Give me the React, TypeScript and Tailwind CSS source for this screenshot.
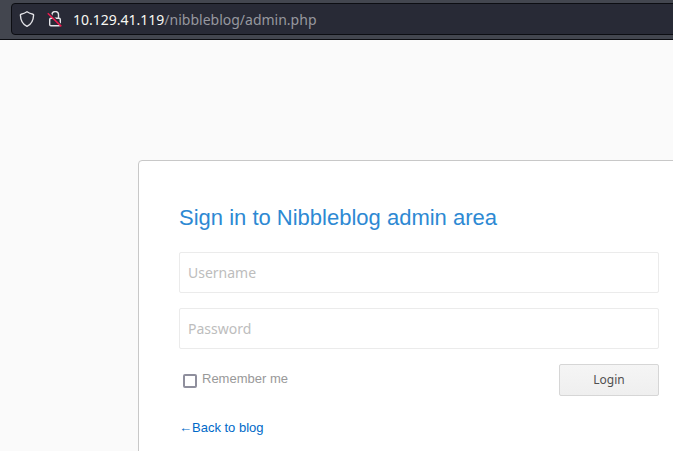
import { useState } from 'react';

const ShieldIcon = () => (
  <svg className="h-4 w-4 shrink-0" viewBox="0 0 16 16" fill="none" aria-hidden="true">
    <path
      d="M8 .8C9.9 2.2 12 2.9 14 3.2c.4 0 .6.4.6.8C14.4 9.4 12.3 13.4 8 15.3 3.7 13.4 1.6 9.4 1.4 4c0-.4.2-.8.6-.8C4 2.9 6.1 2.2 8 .8Z"
      stroke="#e4e4e8"
      strokeWidth="1.4"
      strokeLinejoin="round"
    />
  </svg>
);

const InsecureLockIcon = () => (
  <svg className="h-4 w-4 shrink-0" viewBox="0 0 16 16" fill="none" aria-hidden="true">
    <path d="M5 7V3.8a3.200 3.200 0 0 1 6.500 0V7" stroke="#e4e4e8" strokeWidth="1.4" />
    <rect x="2.7" y="7.2" width="10.6" height="7.6" rx="1.3" stroke="#e4e4e8" strokeWidth="1.4" />
    <path d="M2 1.800 15 14.800" stroke="#282a36" strokeWidth="1.6" />
    <path d="M.8 2.2 14.3 15.4" stroke="#ee1a4e" strokeWidth="1.5" />
  </svg>
);

const AddressBar = () => (
  <header className="h-10 shrink-0 border-b border-[#0c0d12] bg-[#43464f] pt-[3px] pl-[11px]">
    <div className="-mr-2 flex h-8 items-center rounded border border-[#0c0d12] bg-[#282a36] pl-[7px]">
      <ShieldIcon />
      <span className="ml-3 flex">
        <InsecureLockIcon />
      </span>
      <span className="ml-2.5 pt-0.5 text-sm whitespace-nowrap text-[#97989f]">
        <span className="text-[#f8f8f2]">10.129.41.119</span>/nibbleblog/admin.php
      </span>
    </div>
  </header>
);

const inputClass =
  'block h-[41px] w-full rounded-xs border border-[#ebebeb] bg-white px-2 font-["Noto_Sans",sans-serif] text-sm text-[#333333] placeholder:text-[#bdbdbd] focus:outline-none';

const LoginForm = () => {
  const [username, setUsername] = useState('');
  const [password, setPassword] = useState('');
  const [remember, setRemember] = useState(false);

  return (
    <form onSubmit={(e) => e.preventDefault()}>
      <h1 className="mb-[18px] text-[22px] leading-8 text-[#2d89d3]">Sign in to Nibbleblog admin area</h1>

      <input
        type="text"
        aria-label="Username"
        placeholder="Username"
        value={username}
        onChange={(e) => setUsername(e.target.value)}
        className={`${inputClass} mb-[15px]`}
      />
      <input
        type="password"
        aria-label="Password"
        placeholder="Password"
        value={password}
        onChange={(e) => setPassword(e.target.value)}
        className={`${inputClass} mb-[15px]`}
      />

      <div className="flex h-8 items-center justify-between">
        <label className="flex items-center text-[13px] leading-4 text-[#999999]">
          <input
            type="checkbox"
            checked={remember}
            onChange={(e) => setRemember(e.target.checked)}
            className="mt-0.5 mr-[5px] ml-1 h-3.5 w-3.5 appearance-none rounded-xs border-2 border-[#8f8f9d] bg-white checked:bg-[#2d89d3]"
          />
          <span className="pb-0.5">Remember me</span>
        </label>
        <button
          type="submit"
          className="h-8 w-[100px] rounded-xs border border-[#d6d6d6] bg-linear-to-b from-[#f5f5f5] to-[#efefef] font-['Noto_Sans',sans-serif] text-xs text-[#505050]"
        >
          Login
        </button>
      </div>

      <a href="#blog" className="mt-6 inline-block text-[13px] leading-4 text-[#0069c8] hover:underline">
        ←Back to blog
      </a>
    </form>
  );
};

const App = () => (
  <div className="flex h-screen flex-col overflow-hidden bg-[#fafafa] font-['Noto_Sans',sans-serif]">
    <AddressBar />
    <main className="flex-1 pt-[120px] pl-[138px]">
      <div className="-mr-[27px] rounded border border-[#c8c8c8] bg-white px-10 pt-[41px] pb-10 font-['Liberation_Sans',sans-serif]">
        <LoginForm />
      </div>
    </main>
  </div>
);

export default App;
